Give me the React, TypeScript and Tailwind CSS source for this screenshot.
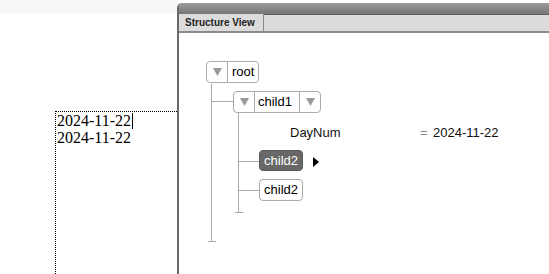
const Tri = ({ className = '' }: { className?: string }) => (
  <svg width="9" height="8" viewBox="0 0 9 8" className={className}>
    <path d="M0 0 L9 0 L4.5 8 Z" fill="#9a9a9a" />
  </svg>
);

const App = () => {
  return (
    <div className="w-[549px] h-[274px] bg-white overflow-hidden flex font-['Liberation_Sans',Arial,sans-serif]">
      {/* Left document area */}
      <div className="w-[177px] shrink-0 flex flex-col">
        <div className="h-[14px] bg-[#f7f7f7]" />
        <div className="flex-1 pt-[97px] pl-[55px]">
          <div className="h-full border-t border-l border-dotted border-black pl-[1px] font-['Liberation_Serif','Times_New_Roman',serif] text-[16px] leading-[17px] text-black">
            <div className="flex items-center">
              <span>2024-11-22</span>
              <span className="w-[1px] h-[16px] bg-black ml-[1px]" />
            </div>
            <div>2024-11-22</div>
          </div>
        </div>
      </div>

      {/* Structure View panel */}
      <div className="flex-1 mt-[3px] flex flex-col rounded-tl-[5px] overflow-hidden border-l-2 border-[#6a6a6a] bg-white">
        <div className="h-[12px] bg-gradient-to-b from-[#9c9c9c] to-[#767676] border-b border-[#5e5e5e]" />
        <div className="h-[18px] bg-[#dcdcdc] border-b-2 border-[#8a8a8a] flex items-end">
          <div className="h-[17px] w-[85px] border-r border-[#8a8a8a] bg-[#dcdcdc] flex items-center pl-[6px] text-[10px] font-bold text-[#222]">
            Structure View
          </div>
        </div>

        {/* Tree diagram */}
        <div className="relative flex-1 text-[13px] text-black">
          {/* connector lines */}
          <div className="absolute left-[32px] top-[51px] w-[1px] h-[158px] bg-[#aaaaaa]" />
          <div className="absolute left-[29px] top-[208px] w-[8px] h-[1px] bg-[#aaaaaa]" />
          <div className="absolute left-[32px] top-[68px] w-[22px] h-[1px] bg-[#aaaaaa]" />
          <div className="absolute left-[59px] top-[80px] w-[1px] h-[100px] bg-[#aaaaaa]" />
          <div className="absolute left-[56px] top-[179px] w-[8px] h-[1px] bg-[#aaaaaa]" />
          <div className="absolute left-[59px] top-[128px] w-[21px] h-[1px] bg-[#aaaaaa]" />
          <div className="absolute left-[59px] top-[157px] w-[21px] h-[1px] bg-[#aaaaaa]" />

          {/* root */}
          <div className="absolute left-[27px] top-[28px] h-[22px] flex items-stretch border border-[#aaaaaa] rounded-[4px] bg-white">
            <div className="w-[21px] flex items-center justify-center border-r border-[#aaaaaa]">
              <Tri />
            </div>
            <div className="px-[4px] flex items-center">root</div>
          </div>

          {/* child1 */}
          <div className="absolute left-[54px] top-[58px] h-[22px] flex items-stretch border border-[#aaaaaa] rounded-[4px] bg-white">
            <div className="w-[21px] flex items-center justify-center border-r border-[#aaaaaa]">
              <Tri />
            </div>
            <div className="w-[44px] pl-[3px] flex items-center">child1</div>
            <div className="w-[21px] flex items-center justify-center border-l border-[#aaaaaa]">
              <Tri />
            </div>
          </div>

          {/* attribute */}
          <div className="absolute left-[111px] top-[91px] leading-[18px] text-[#111]">DayNum</div>
          <div className="absolute left-[241px] top-[91px] leading-[18px] text-[#888]">=</div>
          <div className="absolute left-[254px] top-[91px] leading-[18px] text-[#111]">2024-11-22</div>

          {/* child2 selected */}
          <div className="absolute left-[80px] top-[117px] w-[44px] h-[21px] flex items-center justify-center rounded-[4px] bg-[#686868] border border-[#5a5a5a] text-white">
            child2
          </div>
          <svg className="absolute left-[134px] top-[124px]" width="6" height="10" viewBox="0 0 6 10">
            <path d="M0 0 L6 5 L0 10 Z" fill="#000" />
          </svg>

          {/* child2 */}
          <div className="absolute left-[80px] top-[146px] w-[44px] h-[22px] flex items-center justify-center rounded-[4px] bg-white border border-[#aaaaaa]">
            child2
          </div>
        </div>
      </div>
    </div>
  );
};

export default App;
